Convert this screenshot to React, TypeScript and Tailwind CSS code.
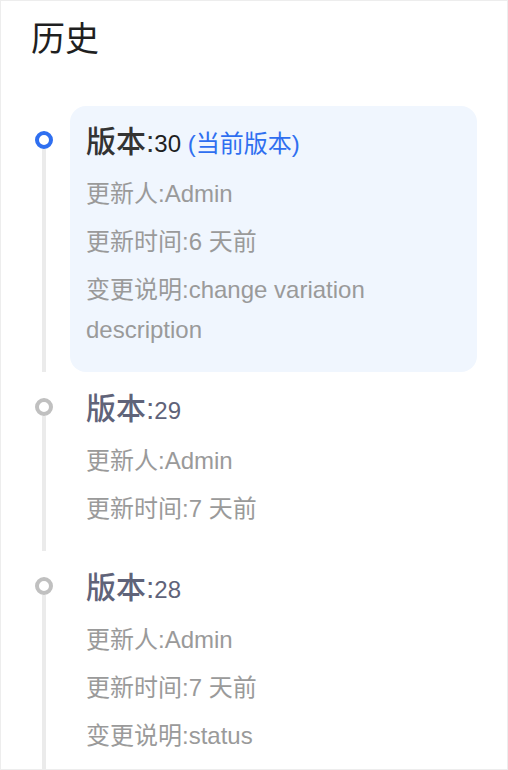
import React from "react";

type Item = {
  version: string;
  current?: boolean;
  rows: string[];
};

const items: Item[] = [
  {
    version: "30",
    current: true,
    rows: ["更新人:Admin", "更新时间:6 天前", "变更说明:change variation description"],
  },
  { version: "29", rows: ["更新人:Admin", "更新时间:7 天前"] },
  { version: "28", rows: ["更新人:Admin", "更新时间:7 天前", "变更说明:status"] },
];

export default function App() {
  return (
    <div
      className="w-[508px] h-[770px] overflow-hidden border border-[#ededed] bg-white"
      style={{ fontFamily: '"Liberation Sans", "Noto Sans CJK SC", sans-serif' }}
    >
      <div className="pl-[30px] pt-[14px] text-[34px] leading-[48px] text-[#1f1f1f]">历史</div>
      <div className="mt-[43px] pl-[33px] pr-[30px] flex flex-col">
        {items.map((it) => (
          <div key={it.version} className="flex">
            <div className="w-[20px] flex flex-col items-center shrink-0">
              <div
                className={
                  it.current
                    ? "mt-[25px] w-[18px] h-[18px] rounded-full border-[4px] border-[#2f6ff0] bg-white"
                    : "mt-[26px] w-[18px] h-[18px] rounded-full border-[4px] border-[#c0c0c0] bg-white"
                }
              />
              <div className="w-[4px] flex-1 bg-[#ebebeb]" />
            </div>
            <div
              className={
                it.current
                  ? "ml-[16px] flex-1 rounded-[16px] bg-[#f0f6fe] px-[16px] pt-[12px] pb-[22px]"
                  : "ml-[16px] flex-1 rounded-[16px] px-[16px] pt-[13px] pb-[22px]"
              }
            >
              <div className="h-[48px] leading-[48px] whitespace-nowrap">
                {it.current ? (
                  <>
                    <span className="text-[30px] font-medium text-[#333333]">版本:</span>
                    <span className="text-[24px] text-[#1f1f1f]">{it.version}</span>
                    <span className="text-[24px] text-[#2f6ff0]"> (当前版本)</span>
                  </>
                ) : (
                  <>
                    <span className="text-[30px] font-medium text-[#5f6379]">版本:</span>
                    <span className="text-[24px] text-[#5f6379]">{it.version}</span>
                  </>
                )}
              </div>
              {it.rows.map((r) => (
                <div key={r} className="mt-[8px] text-[24px] leading-[40px] text-[#9a9a9a]">
                  {r}
                </div>
              ))}
            </div>
          </div>
        ))}
      </div>
    </div>
  );
}
